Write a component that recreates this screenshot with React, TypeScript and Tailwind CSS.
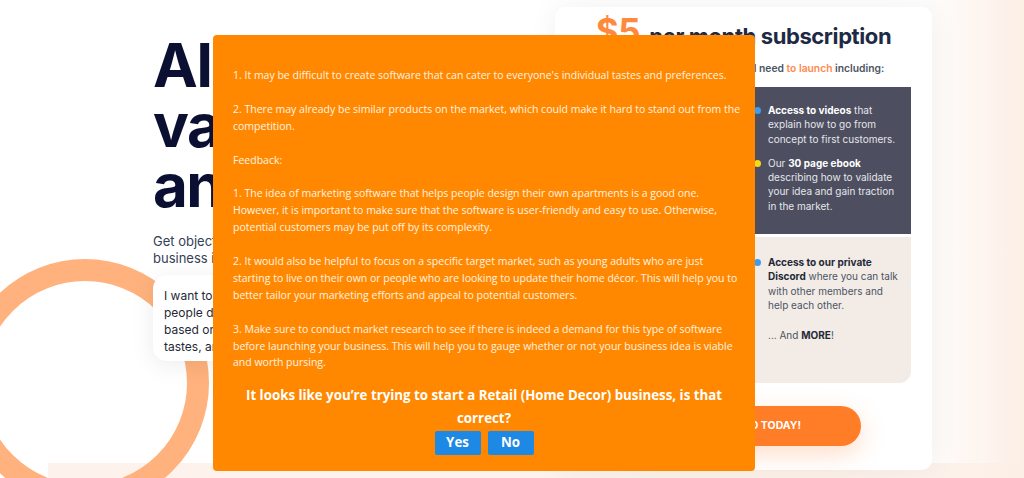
const feedback = `1. It may be difficult to create software that can cater to everyone's individual tastes and preferences.

2. There may already be similar products on the market, which could make it hard to stand out from the
competition.

Feedback:

1. The idea of marketing software that helps people design their own apartments is a good one.
However, it is important to make sure that the software is user-friendly and easy to use. Otherwise,
potential customers may be put off by its complexity.

2. It would also be helpful to focus on a specific target market, such as young adults who are just
starting to live on their own or people who are looking to update their home décor. This will help you to
better tailor your marketing efforts and appeal to potential customers.

3. Make sure to conduct market research to see if there is indeed a demand for this type of software
before launching your business. This will help you to gauge whether or not your business idea is viable
and worth pursing.`;

const Dot = ({ color }: { color: string }) => (
  <span className={`mt-[4px] h-[7px] w-[7px] shrink-0 rounded-full ${color}`} />
);

const PricingCard = () => (
  <div className="flex h-[463px] w-[377px] flex-col rounded-[10px] bg-white px-[21px] shadow-[0_0_30px_rgba(0,0,0,0.06)]">
    <h2 className="mt-[7px] flex items-baseline justify-center gap-[9px] font-bold leading-none tracking-tight text-[#1e2a44]">
      <span className="text-[35px] text-[#ff8a3d]">$5</span>
      <span className="text-[22px]">per month subscription</span>
    </h2>
    <p className="mt-[12px] text-center text-[10.3px] font-semibold leading-[14px] text-[#4b5563]">
      Get access to everything you’ll need <span className="text-[#ff8a4c]">to launch</span> including:
    </p>

    <div className="mt-[12px] h-[147px] bg-[#4d4e60] pl-[178px] pt-[16px] text-[10px] leading-[14.3px] text-[#e5e7eb]">
      <div className="flex gap-[7px]">
        <Dot color="bg-[#3b9cf1]" />
        <p className="w-[133px]">
          <b className="font-bold text-white">Access to videos</b> that explain how to go from concept to first customers.
        </p>
      </div>
      <div className="mt-[10px] flex gap-[7px]">
        <Dot color="bg-[#f7d916]" />
        <p className="w-[133px]">
          Our <b className="font-bold text-white">30 page ebook</b> describing how to validate your idea and gain traction in the market.
        </p>
      </div>
    </div>

    <div className="mt-[3px] h-[146px] rounded-b-[12px] bg-[#f2ebe6] pl-[178px] pt-[18px] text-[10px] leading-[14.3px] text-[#4b5563]">
      <div className="flex gap-[7px]">
        <Dot color="bg-[#3b9cf1]" />
        <p className="w-[133px]">
          <b className="font-bold text-[#1f2937]">Access to our private Discord</b> where you can talk with other members and help each other.
        </p>
      </div>
      <p className="mt-[16px] pl-[14px]">
        ... And <b className="font-bold text-[#1f2937]">MORE</b>!
      </p>
    </div>

    <button className="mx-auto mt-[23px] h-[40px] w-[235px] rounded-full bg-[#ff7d27] text-[10.5px] font-bold text-white shadow-[0_8px_24px_rgba(255,125,39,0.25)]">
      GET STARTED TODAY!
    </button>
  </div>
);

const Modal = () => (
  <div className="absolute left-[213px] top-[35px] flex h-[436px] w-[542px] flex-col rounded-[4px] bg-[#ff8800] px-[20px] pt-[32px] font-['Open_Sans',sans-serif]">
    <div className="mr-[-14px] whitespace-pre-wrap text-[10.5px] leading-[16.9px] text-[#fff3e3]">{feedback}</div>
    <p className="mt-[13px] text-center text-[13.3px] font-bold leading-[23px] text-white">
      It looks like you’re trying to start a Retail (Home Decor) business, is that correct?
    </p>
    <div className="mt-[1px] flex justify-center gap-[7px]">
      <button className="h-[24px] w-[46px] rounded-[2px] bg-[#1e88e5] text-[13.3px] font-bold text-white">Yes</button>
      <button className="h-[24px] w-[46px] rounded-[2px] bg-[#1e88e5] text-[13.3px] font-bold text-white">No</button>
    </div>
  </div>
);

export default function App() {
  return (
    <div className="relative h-[478px] w-[1024px] overflow-hidden bg-white font-['Inter',sans-serif]">
      <div className="absolute bottom-0 left-[48px] right-0 h-[15px] bg-[#fdf3ec]" />
      <div className="absolute right-0 top-0 h-full w-[110px] bg-gradient-to-r from-transparent to-[#fcefe6]" />
      <div className="absolute left-[-39px] top-[259px] h-[248px] w-[248px] rounded-full border-[22px] border-[#ffb27d]" />

      <div className="relative flex pl-[153px] pt-[7px]">
        <div className="w-[395px] pt-[28px]">
          <h1 className="text-[60px] font-bold leading-[60px] tracking-tight text-[#0b1033]">
            AI idea
            <br />
            validation
            <br />
            and feedback
          </h1>
          <p className="mt-[18px] text-[13px] leading-[17px] text-[#334155]">
            Get objective, actionable feedback on your
            <br />
            business idea in seconds.
          </p>
          <div className="mt-[8px] w-[360px] rounded-[14px] bg-white px-[11px] pb-[6px] pt-[12px] text-[12px] leading-[17px] text-[#1f2937] shadow-[0_4px_24px_rgba(0,0,0,0.08)]">
            I want to make a marketing software that helps
            <br />
            people design their own apartments
            <br />
            based on ai and their personal
            <br />
            tastes, and budget.
          </div>
        </div>
        <div className="ml-[7px]">
          <PricingCard />
        </div>
      </div>

      <Modal />
    </div>
  );
}
